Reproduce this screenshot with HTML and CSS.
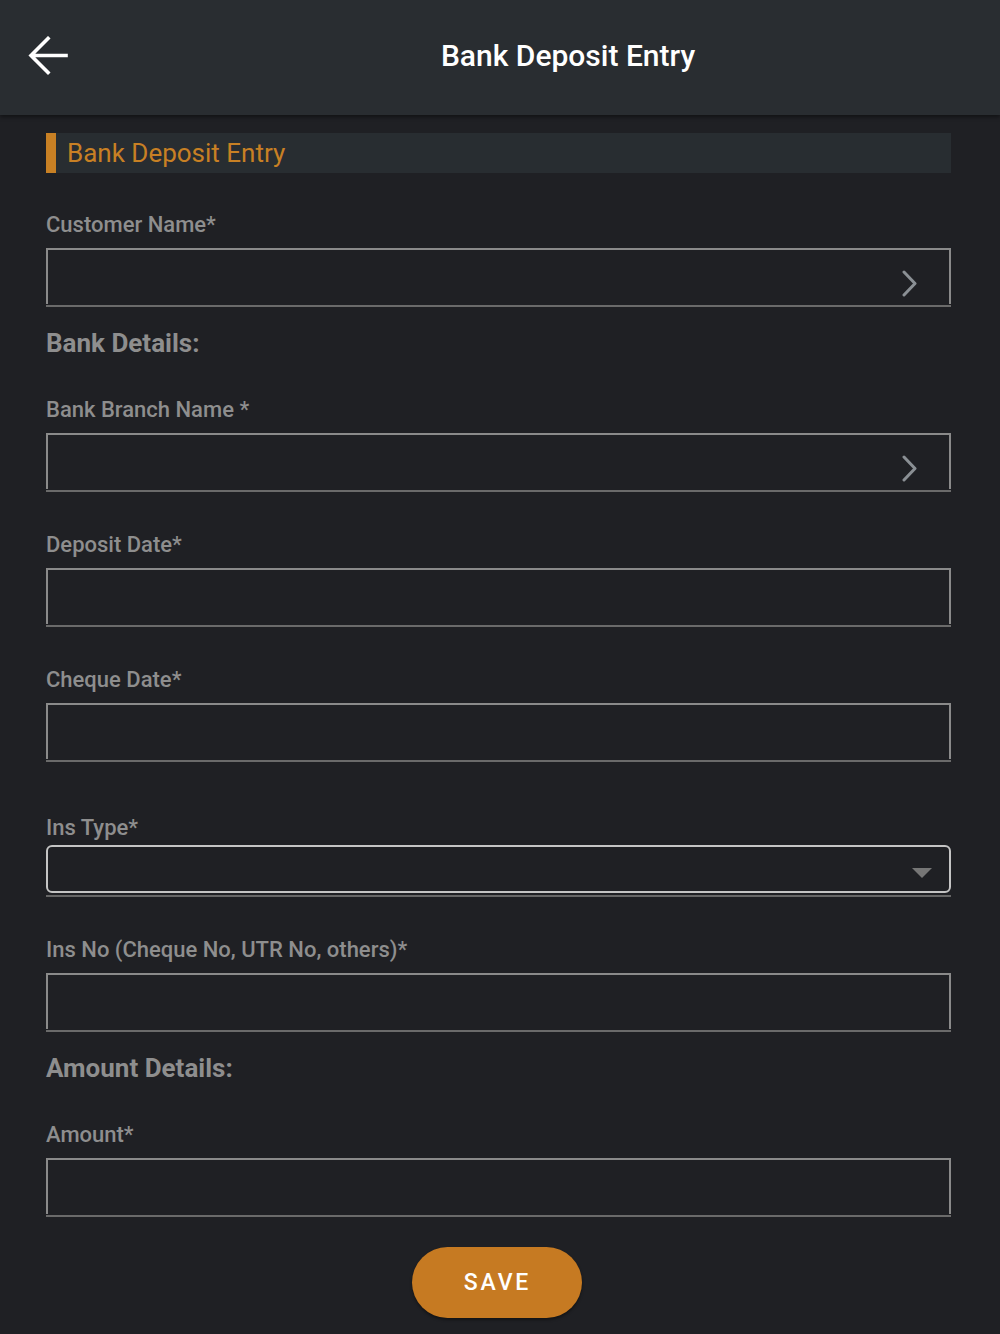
FILE: index.html
```html
<!DOCTYPE html>
<html>
<head>
<meta charset="utf-8">
<link rel="stylesheet" href="styles.css">
</head>
<body>
<header class="appbar">
  <div class="back">
    <svg width="40" height="40" viewBox="0 0 40 40"><path d="M38 19.5 H4 M20 2.5 L3 19.5 L20 36.5" fill="none" stroke="#ffffff" stroke-width="3.6" stroke-linecap="square"/></svg>
  </div>
  <div class="title">Bank Deposit Entry</div>
</header>
<main class="content">
  <div class="section-bar"><span class="accent"></span><span class="section-title">Bank Deposit Entry</span></div>

  <div class="label first">Customer Name*</div>
  <div class="input"><div class="box"><svg class="chev" width="18" height="28" viewBox="0 0 18 28"><path d="M3 2 L14 13.5 L3 25" fill="none" stroke="#8a8f94" stroke-width="3" stroke-linecap="round" stroke-linejoin="round"/></svg></div></div>

  <div class="heading">Bank Details:</div>

  <div class="label">Bank Branch Name *</div>
  <div class="input"><div class="box"><svg class="chev" width="18" height="28" viewBox="0 0 18 28"><path d="M3 2 L14 13.5 L3 25" fill="none" stroke="#8a8f94" stroke-width="3" stroke-linecap="round" stroke-linejoin="round"/></svg></div></div>

  <div class="label">Deposit Date*</div>
  <div class="input"><div class="box"></div></div>

  <div class="label">Cheque Date*</div>
  <div class="input"><div class="box"></div></div>

  <div class="label ins">Ins Type*</div>
  <div class="select-wrap"><div class="select"><span class="tri"></span></div></div>

  <div class="label">Ins No (Cheque No, UTR No, others)*</div>
  <div class="input"><div class="box"></div></div>

  <div class="heading">Amount Details:</div>

  <div class="label">Amount*</div>
  <div class="input"><div class="box"></div></div>

  <div class="actions"><button class="save">SAVE</button></div>
</main>
</body>
</html>
```

FILE: styles.css
```css
html, body {
  margin: 0;
  padding: 0;
  background: #1f2024;
  font-family: Roboto, "Liberation Sans", sans-serif;
}
.appbar {
  height: 115px;
  background: #292d31;
  display: flex;
  align-items: center;
  box-shadow: 0 2px 4px rgba(0,0,0,0.45);
  position: relative;
}
.back {
  width: 136px;
  padding-left: 28px;
  box-sizing: border-box;
  display: flex;
  align-items: center;
  height: 40px;
  margin-top: -4px;
}
.title {
  flex: 1;
  text-align: center;
  color: #ffffff;
  font-size: 30px;
  line-height: 36px;
  font-weight: 500;
  margin-top: -4px;
}
.content {
  padding: 18px 49px 20px 46px;
}
.section-bar {
  height: 40px;
  background: #282d31;
  display: flex;
  align-items: center;
}
.accent {
  width: 10px;
  height: 40px;
  background: #c88024;
}
.section-title {
  color: #c88024;
  font-size: 26px;
  line-height: 30px;
  margin-left: 11px;
}
.label {
  color: #8e8e8e;
  font-size: 22px;
  font-weight: 500;
  line-height: 24px;
  margin-top: 41px;
  margin-bottom: 11px;
}
.label.first { margin-top: 40px; margin-bottom: 11px; }
.label.ins { margin-top: 54px; margin-bottom: 5px; }
.heading {
  color: #8e8e8e;
  font-size: 26px;
  font-weight: 700;
  line-height: 28px;
  margin-top: 22px;
  margin-bottom: 2px;
}
.input {
  border-bottom: 2px solid #6a6a6a;
  padding-bottom: 1px;
}
.box {
  height: 54px;
  border: 2px solid #8a8a8a;
  border-bottom: none;
  display: flex;
  justify-content: flex-end;
  align-items: flex-start;
}
.chev {
  margin-top: 20px;
  margin-right: 30px;
}
.select-wrap {
  border-bottom: 2px solid #666;
  padding-bottom: 2px;
}
.select {
  height: 44px;
  border: 2px solid #c4c4c4;
  border-radius: 6px;
  display: flex;
  justify-content: flex-end;
  align-items: flex-start;
}
.tri {
  width: 0;
  height: 0;
  border-left: 10px solid transparent;
  border-right: 10px solid transparent;
  border-top: 10px solid #767676;
  margin-top: 21px;
  margin-right: 17px;
}
.actions {
  display: flex;
  justify-content: center;
  margin-top: 30px;
  padding-right: 3px;
}
.save {
  width: 170px;
  height: 71px;
  border: none;
  border-radius: 36px;
  background: #c67a22;
  color: #ffffff;
  font-family: Roboto, "Liberation Sans", sans-serif;
  font-size: 23px;
  font-weight: 500;
  letter-spacing: 2.8px;
  padding: 0 0 0 1px;
  box-shadow: 0 2px 3px rgba(0,0,0,0.4);
}
```
